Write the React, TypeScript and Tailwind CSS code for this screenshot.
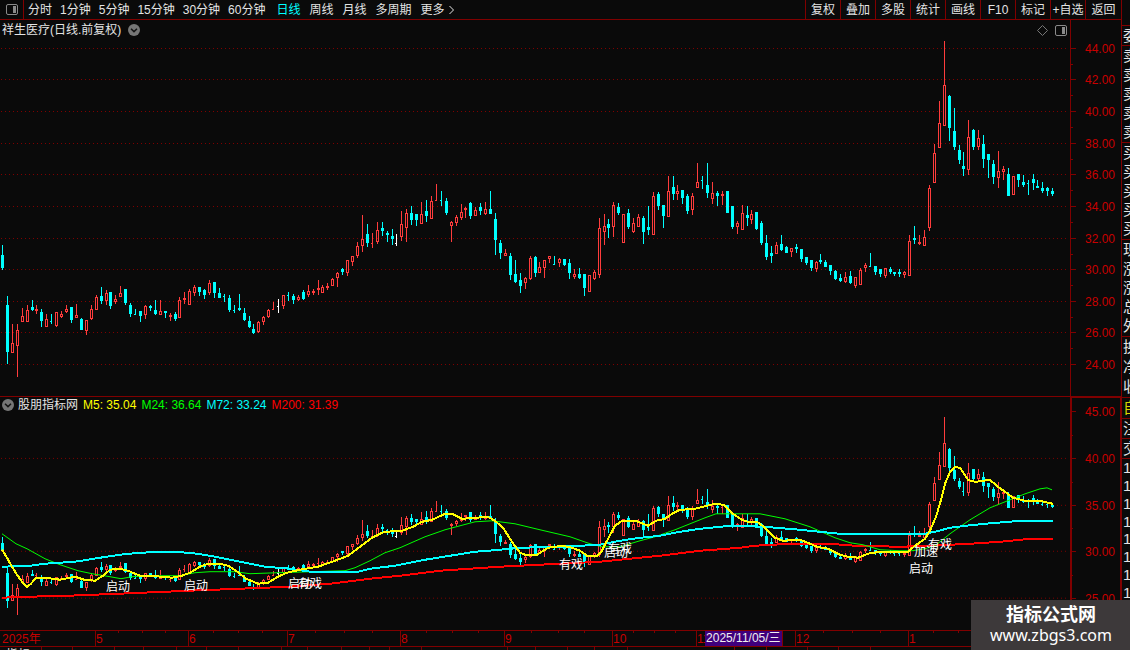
import React from "react";

type Kind = "r" | "c" | "w";
type Candle = { x: number; high: number; top: number; bottom: number; low: number; kind: Kind };

// high, body top, body bottom, low, kind
const SERIES = `245 255 268 270 c|296 305 352 364 c|324 343 353 353 r|324 330 346 377 r|308 316 322 322 r|305 310 322 322 r|300 307 310 311 c|305 309 311 314 r|309 312 321 327 c|314 319 327 327 r
314 321 322 324 c|312 312 326 327 r|311 314 317 318 r|305 309 312 313 r|307 307 320 323 c|304 315 318 318 r|318 319 330 330 c|320 320 331 335 r|305 309 319 320 r|295 297 310 310 r
287 296 301 304 c|290 293 301 305 r|292 292 306 309 c|295 299 302 304 r|286 293 297 297 r|289 289 303 305 c|303 305 314 317 c|309 314 315 315 c|311 311 316 322 c|305 306 315 319 r
305 306 308 311 c|300 310 314 315 c|300 311 315 315 r|311 311 313 318 c|313 315 317 321 r|312 314 319 321 c|297 300 318 318 r|292 298 300 304 r|289 291 305 305 r|285 287 293 296 r
287 287 292 296 c|289 290 295 299 c|280 283 293 295 r|282 282 293 298 c|288 293 298 298 c|294 296 297 302 c|295 298 310 312 c|305 310 311 313 c|294 308 310 311 c|308 313 320 321 c
316 321 327 328 c|324 329 333 334 c|321 322 332 333 r|316 317 322 325 r|309 310 317 318 r|302 309 310 310 r|299 306 307 313 w|295 295 306 309 r|292 295 296 301 c|294 296 300 304 c
295 297 300 301 r|290 292 299 300 c|285 291 295 297 r|289 291 293 295 r|280 288 290 295 r|285 287 293 293 r|283 286 288 290 r|278 279 286 286 r|272 273 278 287 r|268 269 272 275 c
260 260 273 276 r|256 256 262 266 r|242 246 256 258 r|215 239 246 252 r|224 234 243 247 c|233 243 244 248 r|222 230 242 244 r|222 228 231 236 c|231 233 235 242 c|229 236 239 245 c
234 243 244 246 w|211 224 237 241 r|209 213 228 242 r|206 213 220 225 c|214 214 220 226 c|202 214 224 224 r|200 211 216 222 c|196 201 219 219 r|184 200 201 201 r|191 200 201 206 c
198 201 213 215 c|221 222 226 242 r|215 217 223 226 r|204 212 218 220 r|207 208 210 218 r|202 203 216 219 c|207 210 216 216 r|203 207 211 215 c|202 209 214 215 r|191 209 214 214 c
213 219 240 255 c|240 243 253 259 c|249 253 256 256 r|253 256 275 280 c|260 274 282 283 c|273 280 286 293 c|277 278 283 289 r|256 258 279 280 r|256 257 273 277 c|262 267 273 273 r
260 260 268 278 r|256 256 259 263 r|256 264 265 265 c|258 259 263 267 r|259 259 265 266 c|259 263 273 279 c|269 274 277 279 r|268 274 278 279 c|274 274 288 296 c|275 275 292 292 r
270 272 279 280 r|218 228 275 278 r|214 226 232 245 r|219 224 228 238 c|202 205 227 237 r|203 207 213 215 c|214 214 243 243 r|209 213 227 229 c|218 223 232 233 r|214 217 227 227 r
216 218 232 244 c|206 227 230 235 c|192 196 235 235 r|192 194 206 210 c|205 205 216 228 c|176 191 217 217 r|176 187 194 200 c|185 191 194 200 r|190 190 198 204 c|194 196 211 214 c
193 196 210 215 r|163 182 188 188 r|176 180 181 189 c|163 185 193 198 c|182 193 199 204 r|191 193 196 206 c|191 194 196 205 r|191 191 213 213 c|206 206 227 229 c|221 223 227 234 r
205 213 230 230 r|206 215 218 226 c|210 214 220 224 r|212 212 229 230 c|221 223 243 245 c|235 243 257 260 c|246 253 256 263 c|242 245 254 254 r|235 244 250 251 c|246 247 253 253 c
248 248 252 257 r|244 247 249 253 c|249 249 259 262 c|257 257 263 265 c|260 260 268 271 c|261 262 269 272 r|254 260 262 264 c|260 262 267 267 c|265 265 271 275 c|270 271 279 280 c
274 278 281 282 c|272 277 282 283 r|271 276 283 284 c|277 277 286 288 r|268 270 285 285 r|263 265 268 272 r|253 266 267 267 c|266 266 272 275 c|269 269 274 277 c|268 268 276 278 r
267 269 272 274 c|272 272 274 276 c|269 272 274 277 c|271 272 275 278 r|235 241 276 276 r|226 238 240 244 c|235 242 244 245 r|230 237 246 246 r|185 188 228 231 r|144 153 183 183 r
101 123 148 148 r|41 85 126 126 r|95 96 128 141 c|108 131 147 150 c|145 150 160 164 c|152 166 169 176 c|120 137 170 175 r|129 130 147 150 c|130 138 147 150 r|135 144 159 168 c
154 154 160 178 c|160 164 177 184 c|151 171 178 188 r|166 169 172 180 r|168 174 196 196 c|176 176 195 195 r|174 174 180 187 c|175 182 185 187 c|180 183 184 195 c|174 179 183 190 c
180 186 188 188 c|182 188 191 193 c|187 188 191 196 c|188 191 194 196 c`;

const candles: Candle[] = SERIES.split(/[|\n]/).map((row, i) => {
  const [high, top, bottom, low, kind] = row.trim().split(" ");
  // Bars sit five pixels apart, with one pixel dropped every 14 or 15 bars.
  const x = 2 + 5 * i - (Math.floor((i - 6.6) / 14.488) + 1);
  return { x, high: +high, top: +top, bottom: +bottom, low: +low, kind: kind as Kind };
});

// The indicator pane plots the same prices on a flatter scale.
const toLower = (y: number) => Math.round(392.27 + 0.5918 * y);
const lowerCandles = candles.map((c) => {
  const top = toLower(c.top);
  return { ...c, high: toLower(c.high), top, bottom: Math.max(top + 1, toLower(c.bottom)), low: toLower(c.low) };
});

const COLORS: Record<Kind, string> = { r: "#ff3c3c", c: "#00ffff", w: "#ffffff" };
const LINE = "#800000";

function Candles({ data }: { data: Candle[] }) {
  return (
    <g>
      {data.map((c) => {
        const color = COLORS[c.kind];
        const height = c.bottom - c.top;
        const hollow = c.kind === "r" && height > 2;
        return (
          <g key={c.x} fill={color}>
            {hollow ? (
              <>
                <rect x={c.x} y={c.high} width={1} height={Math.max(0, c.top - c.high)} />
                <rect x={c.x} y={c.bottom} width={1} height={Math.max(0, c.low - c.bottom)} />
                <rect x={c.x - 1} y={c.top} width={1} height={height} />
                <rect x={c.x + 1} y={c.top} width={1} height={height} />
                <rect x={c.x} y={c.top} width={1} height={1} />
                <rect x={c.x} y={c.bottom - 1} width={1} height={1} />
              </>
            ) : (
              <>
                <rect x={c.x} y={c.high} width={1} height={Math.max(1, c.low - c.high)} />
                <rect x={c.x - 1} y={c.top} width={height === 1 ? 2 : 3} height={height} />
              </>
            )}
          </g>
        );
      })}
    </g>
  );
}

function Scale({ marks, minor }: { marks: { y: number; label: string; grid?: boolean }[]; minor: number[] }) {
  return (
    <g>
      {marks.map((m) => (
        <g key={m.label}>
          {m.grid !== false && (
            <line x1={1} x2={1067} y1={m.y + 0.5} y2={m.y + 0.5} stroke={LINE} strokeDasharray="1 3" />
          )}
          <rect x={1071} y={m.y} width={5} height={1} fill={LINE} />
          <text x={1115} y={m.y + 5} textAnchor="end" fontSize={12} fill="#c80000">
            {m.label}
          </text>
        </g>
      ))}
      {minor.map((y) => (
        <rect key={y} x={1071} y={y} width={2} height={1} fill={LINE} />
      ))}
    </g>
  );
}

const upperMarks = [48, 79, 111, 143, 174, 206, 238, 269, 301, 332, 364].map((y, i) => ({
  y,
  label: (44 - 2 * i).toFixed(2),
}));
const lowerMarks = [411, 458, 505, 551, 598].map((y, i) => ({ y, label: (45 - 5 * i).toFixed(2), grid: i > 0 }));

const averages = [
  {
    color: "#ff0000",
    width: 2,
    points:
      "2,598 30,597 70,596 120,594 190,591 240,589 290,587 330,584 370,579 400,576 440,571 500,567 560,564 600,562 660,556 700,551 740,548 755,546 790,544 830,544 855,546 900,547 930,546 970,544 1000,542 1030,539 1053,539",
  },
  {
    color: "#00ff00",
    width: 1,
    points:
      "2,534 16,544 27,549 45,559 60,565 78,571 92,574 110,577 121,579 132,577 150,576 180,576 195,573 210,572 235,572 250,574 278,573 345,571 355,568 370,561 385,553 400,548 425,537 445,530 460,526 475,522 492,521 515,524 540,530 570,537 590,544 602,547 620,547 640,541 655,537 675,530 690,524 705,518 716,514 760,514 785,519 810,527 835,538 850,543 863,545 880,550 900,551 912,551 925,549 935,546 950,534 970,520 990,508 1010,500 1025,494 1040,489 1047,488 1052,490",
  },
  {
    color: "#00ffff",
    width: 2,
    points:
      "2,567 30,566 45,564 75,562 100,558 120,555 140,553 165,552 190,553 210,556 240,562 265,567 290,569 310,572 358,572 370,569 395,566 425,560 450,556 475,552 500,550 520,548 560,547 600,545 620,541 640,538 660,536 680,532 700,529 730,526 765,527 800,530 840,534 925,534 935,532 950,528 965,526 985,524 1020,521 1053,521",
  },
  {
    color: "#ffff00",
    width: 2,
    points:
      "2,550 7,558 12,567 17,575 22,582 27,587 31,584 36,578 45,578 60,580 75,577 84,580 95,581 103,576 110,570 120,569 128,571 140,576 150,576 172,578 182,576 190,573 200,567 208,564 220,564 228,566 236,571 246,579 258,584 268,583 278,577 287,573 300,570 318,567 335,561 348,556 360,547 372,538 380,534 385,532 402,531 413,527 422,522 432,520 445,514 452,514 462,519 475,518 488,517 495,521 503,528 512,542 520,553 525,555 537,555 548,548 562,546 572,548 580,551 587,556 597,556 602,551 607,541 615,526 622,521 636,521 648,526 656,521 665,519 672,514 680,510 695,509 703,507 715,504 724,505 733,514 742,520 748,522 757,522 765,528 775,538 783,541 800,540 808,543 817,547 828,549 840,555 848,557 858,558 868,554 880,552 908,552 915,546 925,539 930,531 936,517 941,500 945,484 950,472 955,467 960,468 968,480 975,482 990,480 998,487 1008,494 1013,498 1025,501 1040,501 1053,504",
  },
];

const signals = [
  { x: 106, y: 591, text: "启动" },
  { x: 184, y: 590, text: "启动" },
  { x: 288, y: 588, text: "启动" },
  { x: 298, y: 588, text: "有戏" },
  { x: 559, y: 569, text: "有戏" },
  { x: 604, y: 557, text: "启动" },
  { x: 608, y: 553, text: "有戏" },
  { x: 928, y: 549, text: "有戏" },
  { x: 914, y: 556, text: "加速" },
  { x: 909, y: 573, text: "启动" },
];

const months = [
  { x: 95, label: "5" },
  { x: 188, label: "6" },
  { x: 287, label: "7" },
  { x: 400, label: "8" },
  { x: 504, label: "9" },
  { x: 612, label: "10" },
  { x: 696, label: "11" },
  { x: 795, label: "12" },
  { x: 908, label: "1" },
];
const weekTicks = [118, 142, 165, 213, 238, 262, 315, 344, 372, 426, 452, 478, 531, 558, 584, 633, 654, 675, 823, 852, 880, 933, 958];

const periods = ["分时", "1分钟", "5分钟", "15分钟", "30分钟", "60分钟"];
const longPeriods = ["日线", "周线", "月线", "多周期"];
const tools = ["复权", "叠加", "多股", "统计", "画线", "F10", "标记", "+自选", "返回"];

const legend = [
  { text: "M5: 35.04", cls: "text-[#ffff00]" },
  { text: "M24: 36.64", cls: "text-[#00ff00]" },
  { text: "M72: 33.24", cls: "text-[#00ffff]" },
  { text: "M200: 31.39", cls: "text-[#ff0000]" },
];

const quoteGroups = [
  { rows: ["委"], cls: "h-5" },
  { rows: ["卖", "卖", "卖", "卖", "卖"], cls: "h-[97px]" },
  { rows: ["买", "买", "买", "买", "买"], cls: "h-[97px]" },
  { rows: ["现", "涨", "涨", "总", "外"], cls: "h-[97px]" },
  { rows: ["换", "净", "收"], cls: "h-[61px]" },
  { rows: ["自"], cls: "h-[21px] text-[#d8d800]" },
  { rows: ["注"], cls: "h-5" },
  { rows: ["交"], cls: "h-5" },
  { rows: ["1", "1", "1", "1", "1", "1", "1", "1"], cls: "h-36" },
];

const footTabs = [
  { text: "指标", cls: "w-[42px]" },
  { text: "", cls: "w-[31px]" },
  { text: "", cls: "w-[42px]" },
  { text: "", cls: "w-[29px]" },
  { text: "", cls: "w-[33px]" },
  { text: "", cls: "w-[30px]" },
  { text: "", cls: "w-8" },
  { text: "", cls: "w-[43px]" },
  { text: "", cls: "w-[26px]" },
  { text: "", cls: "w-[34px]" },
  { text: "", cls: "w-7" },
  { text: "", cls: "w-5" },
  { text: "", cls: "w-8" },
  { text: "", cls: "w-[86px]" },
  { text: "", cls: "w-7" },
  { text: "", cls: "w-8" },
  { text: "", cls: "w-[27px]" },
  { text: "", cls: "w-[33px]" },
  { text: "", cls: "w-[107px]" },
  { text: "", cls: "w-8" },
  { text: "", cls: "w-[41px]" },
  { text: "", cls: "w-[31px]" },
  { text: "", cls: "w-8" },
];

function PanelIcon() {
  return (
    <svg width="12" height="11" viewBox="0 0 12 11" aria-hidden="true">
      <rect x="0.5" y="0.5" width="11" height="10" rx="1.5" fill="none" stroke="#8a8a8a" />
      <rect x="7" y="2" width="3" height="7" fill="#8a8a8a" />
    </svg>
  );
}

function ChevronBadge() {
  return (
    <svg width="12" height="12" viewBox="0 0 12 12" aria-hidden="true">
      <circle cx="6" cy="6" r="6" fill="#767676" />
      <path d="M3 4.8 L6 7.6 L9 4.8" fill="none" stroke="#141414" strokeWidth="1.5" />
    </svg>
  );
}

export default function App() {
  return (
    <div className="relative flex h-screen w-full overflow-hidden bg-[#0a0a0a] font-['Liberation_Sans','Noto_Sans_CJK_SC',sans-serif] text-xs leading-4 text-[#e4e4e4]">
      <main className="flex min-w-0 flex-1 flex-col">
        <header className="flex h-5 shrink-0 justify-between border-b border-[#800000] whitespace-nowrap">
          <nav className="flex items-center">
            <button aria-label="侧栏" className="flex h-full w-6 items-center justify-center border-r border-[#800000]">
              <PanelIcon />
            </button>
            <div className="flex gap-2 pl-1">
              {periods.map((p) => (
                <button key={p}>{p}</button>
              ))}
            </div>
            <div className="flex gap-[9px] pl-[11px]">
              {longPeriods.map((p) => (
                <button key={p} className={p === "日线" ? "text-[#00ffff]" : ""}>
                  {p}
                </button>
              ))}
              <button className="flex items-center gap-1">
                更多
                <svg width="6" height="10" viewBox="0 0 6 10" aria-hidden="true">
                  <path d="M0.5 1 L4.5 5 L0.5 9" fill="none" stroke="#e4e4e4" />
                </svg>
              </button>
            </div>
          </nav>
          <nav className="flex">
            {tools.map((t) => (
              <button key={t} className="w-[35px] border-l border-[#800000] last:w-9">
                {t}
              </button>
            ))}
          </nav>
        </header>

        <section className="flex min-h-0 flex-[377] flex-col border-b border-[#800000]">
          <div className="flex h-5 shrink-0">
            <div className="flex flex-1 items-center justify-between border-r border-[#800000] pr-[3px] pl-0.5">
              <h1 className="flex items-center gap-[7px]">
                祥生医疗(日线.前复权)
                <button aria-label="展开">
                  <ChevronBadge />
                </button>
              </h1>
              <div className="flex items-center gap-[7px]">
                <svg width="11" height="11" viewBox="0 0 11 11" aria-hidden="true">
                  <path d="M5.5 0.5 L10.5 5.5 L5.5 10.5 L0.5 5.5 Z" fill="none" stroke="#777777" />
                </svg>
                <PanelIcon />
              </div>
            </div>
            <div className="w-[50px]" />
          </div>
          <svg className="block min-h-0 w-full flex-1" viewBox="0 40 1121 356" preserveAspectRatio="none" shapeRendering="crispEdges">
            <rect x={1070} y={40} width={1} height={356} fill={LINE} />
            <Scale marks={upperMarks} minor={[64, 95, 127, 159, 190, 222, 254, 285, 317, 348]} />
            <Candles data={candles} />
          </svg>
        </section>

        <section className="relative min-h-0 flex-[233]">
          <svg className="block h-full w-full" viewBox="0 397 1121 233" preserveAspectRatio="none" shapeRendering="crispEdges">
            <rect x={1070} y={397} width={2} height={233} fill={LINE} />
            <rect x={1070} y={397} width={51} height={1} fill={LINE} />
            <rect x={1120} y={397} width={1} height={233} fill={LINE} />
            <Scale marks={lowerMarks} minor={[435, 482, 528, 575]} />
            <Candles data={lowerCandles} />
            {averages.map((a) => (
              <polyline key={a.color} points={a.points} fill="none" stroke={a.color} strokeWidth={a.width} />
            ))}
            {signals.map((s, i) => (
              <text key={i} x={s.x} y={s.y} fontSize={12} fill="#ffffff">
                {s.text}
              </text>
            ))}
          </svg>
          <div className="absolute top-0 left-0 flex items-center gap-1 pl-0.5 whitespace-nowrap">
            <button aria-label="展开指标">
              <ChevronBadge />
            </button>
            <h2>股朋指标网</h2>
            <div className="flex gap-[5px] pl-px">
              {legend.map((l) => (
                <span key={l.text} className={l.cls}>
                  {l.text}
                </span>
              ))}
            </div>
          </div>
        </section>

        <div className="relative h-4 shrink-0 border-t border-[#800000]">
          <svg className="block h-full w-full" viewBox="0 631 1121 15" preserveAspectRatio="none" shapeRendering="crispEdges">
            <text x={2} y={643} fontSize={12} fill="#c80000">
              2025年
            </text>
            {months.map((m) => (
              <g key={m.x}>
                <rect x={m.x} y={631} width={1} height={15} fill={LINE} />
                <text x={m.x + 1} y={643} fontSize={12} fill="#c80000">
                  {m.label}
                </text>
              </g>
            ))}
            {weekTicks.map((x) => (
              <rect key={x} x={x} y={631} width={1} height={2} fill={LINE} />
            ))}
          </svg>
          <span className="absolute top-0 left-[62.9%] h-[15px] border-r border-[#800000] bg-[#40007c] px-px leading-[15px] whitespace-nowrap text-[#f0f0f0]">
            2025/11/05/三
          </span>
        </div>

        <footer className="flex h-1 shrink-0 overflow-hidden border-t border-[#800000]">
          {footTabs.map((t, i) => (
            <span key={i} className={`${t.cls} h-4 shrink-0 border-r border-[#800000] pl-1.5`}>
              {t.text}
            </span>
          ))}
        </footer>
      </main>

      <aside className="flex w-[9px] shrink-0 flex-col overflow-hidden border-l border-[#800000] pt-[25px] text-[15px]">
        {quoteGroups.map((g, i) => (
          <div key={i} className={`${g.cls} flex shrink-0 flex-col justify-around border-t border-[#800000] pl-px`}>
            {g.rows.map((r, j) => (
              <span key={j} className="whitespace-nowrap">
                {r}
              </span>
            ))}
          </div>
        ))}
      </aside>

      <a
        href="#"
        className="absolute right-0 bottom-0 flex h-[50px] w-[159px] flex-col items-center justify-center bg-[#3d393a] pl-px text-white"
      >
        <span className="text-lg leading-5 font-bold">指标公式网</span>
        <span className="font-['Noto_Sans',sans-serif] text-base leading-5">www.zbgs3.com</span>
      </a>
    </div>
  );
}
